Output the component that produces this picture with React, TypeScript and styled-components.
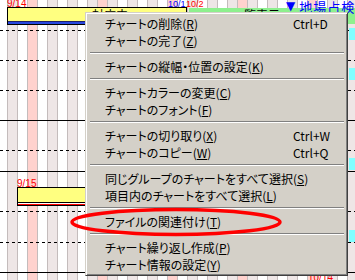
import styled, { createGlobalStyle } from "styled-components";

const GlobalStyle = createGlobalStyle`
  html, body {
    margin: 0;
    padding: 0;
    background: #fff;
  }
  body {
    font-family: "Noto Sans CJK JP", "Noto Sans", sans-serif;
  }
`;

const Screen = styled.div`
  position: relative;
  width: 355px;
  height: 280px;
  overflow: hidden;
  background: #fff;
`;

const DayGrid = styled.div`
  position: absolute;
  inset: 0;
  display: flex;
`;

const Lead = styled.div`
  flex: none;
  width: 7px;
`;

type DayKind = "plain" | "shade" | "holiday";

const Day = styled.div<{ $kind: DayKind }>`
  flex: none;
  width: 9px;
  border-left: 1px solid #c4bcbc;
  background: ${(p) =>
    p.$kind === "holiday" ? "#ffd2ce" : p.$kind === "shade" ? "#eee6e6" : "#fff"};
`;

const Rows = styled.div`
  position: absolute;
  inset: 0;
  display: flex;
  flex-direction: column;
`;

const Row = styled.div<{ $h: number }>`
  position: relative;
  flex: none;
  height: ${(p) => p.$h}px;
`;

const Rule = styled.div<{ $dashed?: boolean }>`
  flex: none;
  height: 1px;
  background: ${(p) =>
    p.$dashed
      ? "repeating-linear-gradient(to right, #000 0 3px, transparent 3px 6px)"
      : "#000"};
`;

const DateLabel = styled.span<{ $x: number; $y: number; $red?: boolean; $size?: number }>`
  position: absolute;
  left: ${(p) => p.$x}px;
  top: ${(p) => p.$y}px;
  font-family: "Liberation Sans", Arial, sans-serif;
  font-size: ${(p) => p.$size ?? 10}px;
  line-height: 8px;
  color: ${(p) => (p.$red ? "#ff0000" : "#0000ff")};
  white-space: nowrap;
`;

const ChartBar = styled.div<{ $x: number; $y: number; $w: number }>`
  position: absolute;
  left: ${(p) => p.$x}px;
  top: ${(p) => p.$y}px;
  width: ${(p) => p.$w}px;
  box-sizing: border-box;
  border: 1px solid #000;
  display: flex;
  flex-direction: column;
`;

const BarFill = styled.div<{ $h: number; $color: string }>`
  height: ${(p) => p.$h}px;
  background: ${(p) => p.$color};
  padding-left: 84px;
  font-size: 12px;
  line-height: 14px;
  color: #000;
  overflow: hidden;
  white-space: nowrap;
`;

const Stripe = styled.div<{ $color: string; $h?: number }>`
  height: ${(p) => p.$h ?? 1}px;
  background: ${(p) => p.$color};
`;

const GreenBar = styled.div`
  position: absolute;
  left: 189px;
  top: 8px;
  width: 170px;
  height: 16px;
  background: #8ef08e;
  padding-left: 43px;
  font-size: 12px;
  line-height: 14px;
  color: #000;
  white-space: nowrap;
`;

const Marker = styled.div`
  position: absolute;
  left: 286px;
  top: -1px;
  display: flex;
  align-items: flex-start;
  gap: 4px;
  color: #0000ff;
  white-space: nowrap;
`;

const Triangle = styled.span`
  font-family: "DejaVu Sans", sans-serif;
  font-size: 12px;
  line-height: 14px;
`;

const MarkerText = styled.span`
  font-size: 13px;
  line-height: 15px;
  letter-spacing: 1px;
`;

const CyanBlock = styled.div<{ $top: number }>`
  position: absolute;
  left: 349px;
  top: ${(p) => p.$top}px;
  width: 6px;
  height: 12px;
  background: #80ffff;
`;

const Menu = styled.div`
  position: absolute;
  left: 85px;
  top: 12px;
  width: 263px;
  box-sizing: border-box;
  padding: 2px;
  background: #d4d0c8;
  border: 1px solid;
  border-color: #d4d0c8 #404040 #404040 #d4d0c8;
  box-shadow: inset 1px 1px 0 #fff, inset -1px -1px 0 #808080;
  display: flex;
  flex-direction: column;
`;

const Item = styled.div`
  display: grid;
  grid-template-columns: 188px auto;
  height: 17px;
  align-items: center;
  padding-left: 17px;
  font-size: 12px;
  line-height: 17px;
  font-feature-settings: "palt";
  color: #000;
  white-space: nowrap;
`;

const Key = styled.span`
  font-size: 12px;
`;

const Separator = styled.div`
  height: 9px;
  box-sizing: border-box;
  padding-top: 3px;
  margin: 0 1px 0 2px;
  &::before {
    content: "";
    display: block;
    border-top: 1px solid #808080;
    border-bottom: 1px solid #fff;
  }
`;

const Overlay = styled.svg`
  position: absolute;
  left: 0;
  top: 0;
  pointer-events: none;
`;

type Entry = { label: string; key: string; shortcut?: string } | null;

const entries: Entry[] = [
  { label: "チャートの削除", key: "R", shortcut: "Ctrl+D" },
  { label: "チャートの完了", key: "Z" },
  null,
  { label: "チャートの縦幅・位置の設定", key: "K" },
  null,
  { label: "チャートカラーの変更", key: "C" },
  { label: "チャートのフォント", key: "F" },
  null,
  { label: "チャートの切り取り", key: "X", shortcut: "Ctrl+W" },
  { label: "チャートのコピー", key: "W", shortcut: "Ctrl+Q" },
  null,
  { label: "同じグループのチャートをすべて選択", key: "S" },
  { label: "項目内のチャートをすべて選択", key: "L" },
  null,
  { label: "ファイルの関連付け", key: "T" },
  null,
  { label: "チャート繰り返し作成", key: "P" },
  { label: "チャート情報の設定", key: "Y" },
];

const dayKind = (i: number): DayKind =>
  i % 7 === 2 ? "holiday" : i % 2 === 0 ? "shade" : "plain";

const rows: { h: number; dashed: boolean }[] = [
  { h: 30, dashed: true },
  { h: 29, dashed: true },
  { h: 29, dashed: true },
  { h: 29, dashed: false },
  { h: 29, dashed: true },
  { h: 20, dashed: false },
  { h: 39, dashed: true },
  { h: 30, dashed: true },
  { h: 29, dashed: false },
];

const App = () => {
  return (
    <Screen>
      <GlobalStyle />
      <DayGrid>
        <Lead />
        {Array.from({ length: 35 }, (_, i) => (
          <Day key={i} $kind={dayKind(i)} />
        ))}
      </DayGrid>

      <Rows>
        {rows.map((r, i) => (
          <div key={i} style={{ display: "contents" }}>
            <Row $h={r.h}>
              {i === 0 && (
                <>
                  <DateLabel $x={7} $y={0} $red>
                    9/14
                  </DateLabel>
                  <DateLabel $x={168} $y={0} $size={9}>
                    10/1
                  </DateLabel>
                  <DateLabel $x={186} $y={0} $size={9} $red>
                    10/2
                  </DateLabel>
                  <ChartBar $x={7} $y={7} $w={180}>
                    <BarFill $h={13} $color="#ffff80">
                      対応中
                    </BarFill>
                    <Stripe $color="#20206a" />
                    <Stripe $color="#2848e0" $h={2} />
                  </ChartBar>
                  <GreenBar>一覧表示</GreenBar>
                  <Marker>
                    <Triangle>▼</Triangle>
                    <MarkerText>地場占検</MarkerText>
                  </Marker>
                </>
              )}
              {i === 6 && (
                <>
                  <DateLabel $x={17} $y={8} $red>
                    9/15
                  </DateLabel>
                  <ChartBar $x={17} $y={15} $w={120}>
                    <BarFill $h={14} $color="#ffff80" />
                    <Stripe $color="#000" />
                    <Stripe $color="#fff" />
                    <Stripe $color="#ff0000" />
                  </ChartBar>
                </>
              )}
            </Row>
            <Rule $dashed={r.dashed} />
          </div>
        ))}
        <Row $h={10}>
          <DateLabel $x={308} $y={1} $red>
            10/14
          </DateLabel>
        </Row>
      </Rows>

      <CyanBlock $top={28} />
      <CyanBlock $top={68} />
      <CyanBlock $top={158} />
      <CyanBlock $top={230} />

      <Menu>
        {entries.map((e, i) =>
          e ? (
            <Item key={i}>
              <span>
                {e.label}(<u>{e.key}</u>)
              </span>
              {e.shortcut && <Key>{e.shortcut}</Key>}
            </Item>
          ) : (
            <Separator key={i} />
          )
        )}
      </Menu>

      <Overlay width={355} height={280} viewBox="0 0 355 280">
        <ellipse cx={176} cy={222} rx={104} ry={12.5} fill="none" stroke="#ff0000" strokeWidth={3.5} />
      </Overlay>
    </Screen>
  );
};

export default App;
